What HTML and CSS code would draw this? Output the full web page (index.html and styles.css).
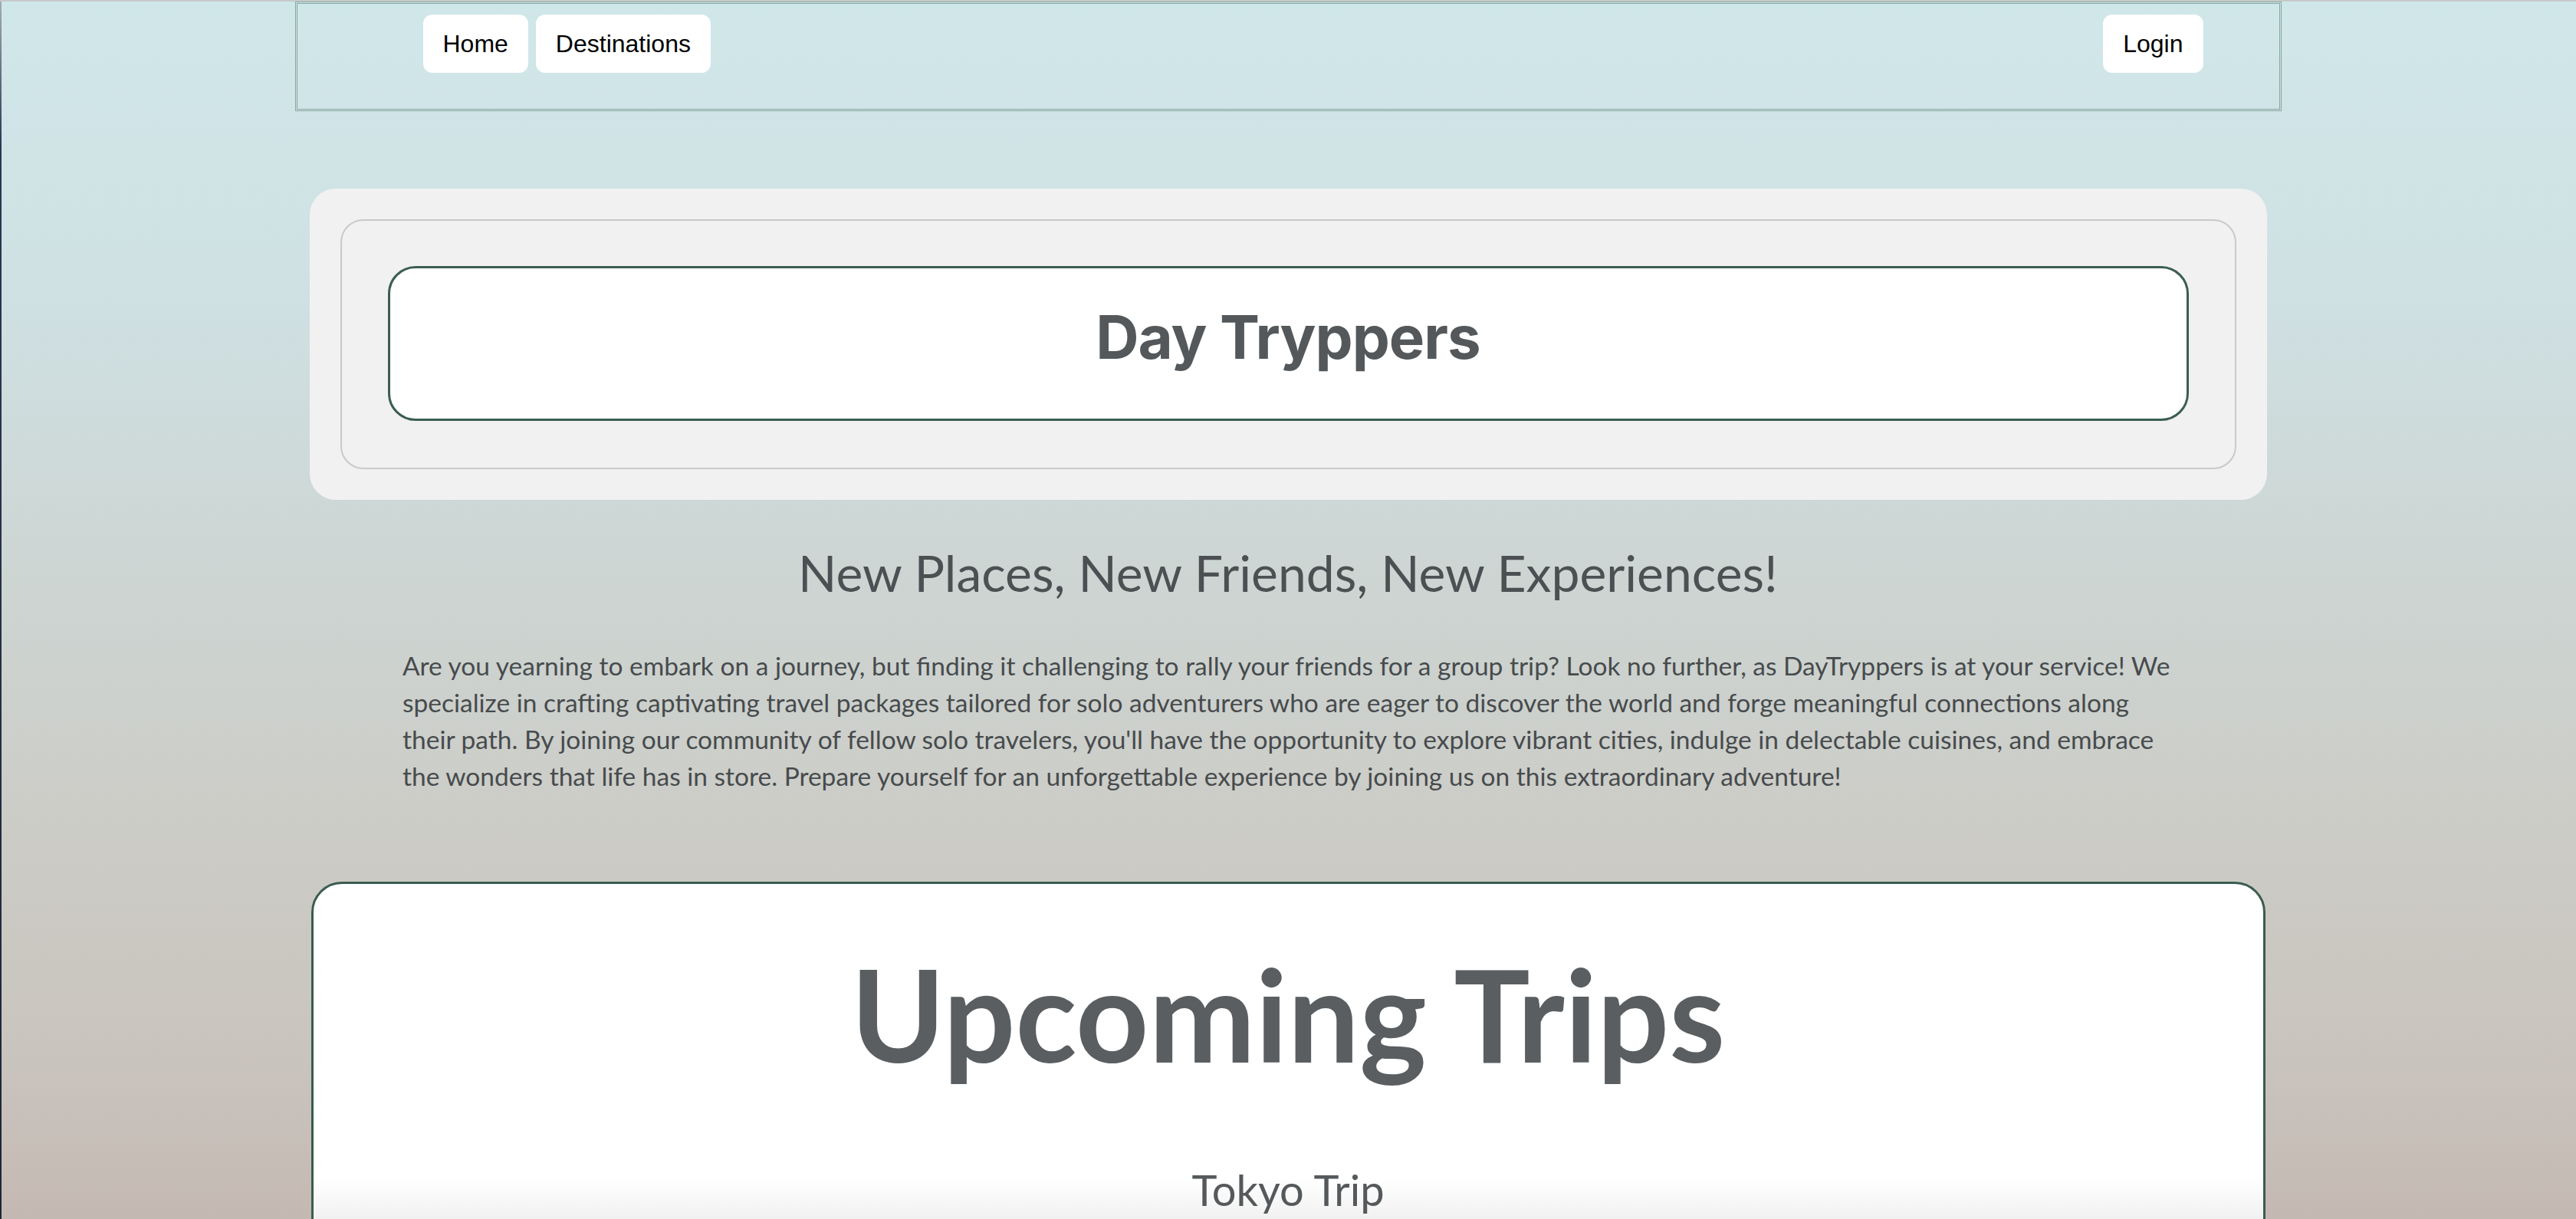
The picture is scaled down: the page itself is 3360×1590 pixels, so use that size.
FILE: index.html
```html
<!DOCTYPE html>
<html lang="en">
<head>
<meta charset="utf-8">
<title>Day Tryppers</title>
<link rel="stylesheet" href="styles.css">
</head>
<body>
<div class="page">
  <nav class="topnav">
    <a class="nav-btn" href="#">Home</a>
    <a class="nav-btn" href="#">Destinations</a>
    <a class="nav-btn nav-login" href="#">Login</a>
  </nav>

  <header class="hero">
    <div class="hero-frame">
      <div class="hero-title">
        <h1>Day Tryppers</h1>
      </div>
    </div>
  </header>

  <section class="intro">
    <h2 class="intro-heading">New Places, New Friends, New Experiences!</h2>
    <p class="intro-text">Are you yearning to embark on a journey, but finding it challenging to rally your friends for a group trip? Look no further, as DayTryppers is at your service! We specialize in crafting captivating travel packages tailored for solo adventurers who are eager to discover the world and forge meaningful connections along their path. By joining our community of fellow solo travelers, you'll have the opportunity to explore vibrant cities, indulge in delectable cuisines, and embrace the wonders that life has in store. Prepare yourself for an unforgettable experience by joining us on this extraordinary adventure!</p>
  </section>

  <section class="trips">
    <h2 class="trips-heading">Upcoming Trips</h2>
    <div class="trip">
      <h3 class="trip-name">Tokyo Trip</h3>
    </div>
  </section>
</div>
</body>
</html>
```

FILE: styles.css
```css
html {
  height: 100%;
  overflow: hidden;
  background:
    linear-gradient(to bottom, #a3adb3 0, #2c3852 12%, #1d2737 100%) 0 0 / 2px 100% no-repeat,
    linear-gradient(to bottom, #d0e7ea 0, #cfe0e2 25%, #cdd6d4 45%, #cccbc5 70%, #c9c3bd 88%, #c4b9b2 100%);
}

body {
  margin: 0;
  height: 100%;
  font-family: "Lato", "Open Sans", sans-serif;
}

.page {
  border-top: 2px solid #c8c9c9;
}

/* ---------- navigation ---------- */
.topnav {
  box-sizing: border-box;
  width: 2591px;
  height: 143px;
  margin: 0 auto;
  border: 3px double #86a69e;
  padding: 14px 99px 0 164px;
  display: flex;
  align-items: flex-start;
  gap: 10px;
}

.nav-btn {
  box-sizing: border-box;
  height: 76px;
  padding: 0 26px;
  display: flex;
  align-items: center;
  background: #fff;
  border-radius: 12px;
  color: #000;
  text-decoration: none;
  font-family: "Liberation Sans", Arial, sans-serif;
  font-size: 32px;
}

.nav-login {
  margin-left: auto;
}

/* ---------- hero ---------- */
.hero {
  box-sizing: border-box;
  width: 2553px;
  height: 406px;
  margin: 101px auto 0;
  padding: 40px;
  background: #f1f1f1;
  border-radius: 34px;
}

.hero-frame {
  box-sizing: border-box;
  height: 100%;
  border: 2px solid #c9c9c9;
  border-radius: 30px;
  padding: 59px 60px;
}

.hero-title {
  box-sizing: border-box;
  height: 202px;
  border: 3px solid #3b5e51;
  border-radius: 36px;
  background: #fff;
  display: flex;
  align-items: center;
  justify-content: center;
}

.hero-title h1 {
  margin: 0 0 18px;
  font-family: "Inter", "Roboto", sans-serif;
  font-weight: 700;
  font-size: 78px;
  letter-spacing: -1px;
  color: #54585a;
}

/* ---------- intro ---------- */
.intro {
  margin-top: 62px;
}

.intro-heading {
  margin: 0;
  text-align: center;
  font-weight: 400;
  font-size: 66px;
  line-height: 1;
  color: #4b5052;
}

.intro-text {
  width: 2310px;
  margin: 64px auto 0;
  font-size: 33.5px;
  line-height: 48px;
  color: #474b4d;
}

/* ---------- trips ---------- */
.trips {
  box-sizing: border-box;
  width: 2549px;
  margin: 114px auto 0;
  padding-top: 86px;
  border: 3px solid #3a5c4f;
  border-radius: 40px;
  background: linear-gradient(to bottom, #fff 0, #fff 384px, #f0f0f0 440px);
  height: 900px;
}

.trips-heading {
  margin: 0;
  text-align: center;
  font-weight: 700;
  font-size: 166px;
  line-height: 1;
  color: #5a5e60;
}

.trip {
  margin-top: 119px;
}

.trip-name {
  margin: 0;
  text-align: center;
  font-weight: 400;
  font-size: 56px;
  line-height: 1;
  color: #55595b;
}
```
